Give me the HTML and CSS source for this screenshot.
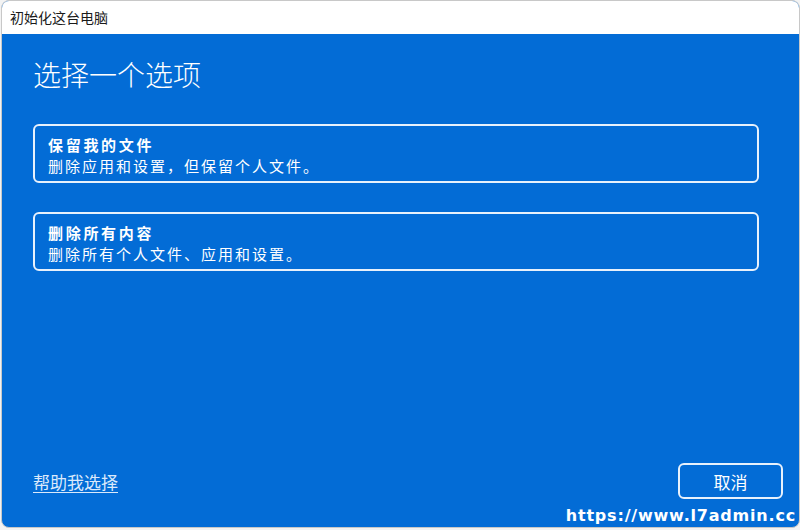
FILE: index.html
```html
<!DOCTYPE html>
<html lang="zh-CN">
<head>
<meta charset="utf-8">
<title>初始化这台电脑</title>
<link rel="stylesheet" href="styles.css">
</head>
<body>
<div class="window">
  <div class="titlebar">初始化这台电脑</div>
  <div class="content">
    <h1 class="heading">选择一个选项</h1>
    <div class="options">
      <div class="option">
        <div class="option-title">保留我的文件</div>
        <div class="option-desc">删除应用和设置，但保留个人文件。</div>
      </div>
      <div class="option">
        <div class="option-title">删除所有内容</div>
        <div class="option-desc">删除所有个人文件、应用和设置。</div>
      </div>
    </div>
    <div class="footer">
      <a class="help-link" href="#">帮助我选择</a>
      <button class="cancel">取消</button>
    </div>
  </div>
  <div class="watermark">https://www.l7admin.cc</div>
</div>
</body>
</html>
```
FILE: styles.css
```css
html, body {
  margin: 0;
  padding: 0;
  background: #f3f3f3;
}
body {
  width: 800px;
  height: 530px;
  overflow: hidden;
  font-family: "Noto Sans CJK SC", "Noto Sans", sans-serif;
}
.window {
  position: relative;
  box-sizing: border-box;
  width: 799px;
  height: 528px;
  margin-left: 1px;
  border: 1px solid #c8c8c8;
  border-radius: 8px;
  overflow: hidden;
  display: flex;
  flex-direction: column;
  background: #036cd6;
}
.titlebar {
  height: 33px;
  background: #ffffff;
  color: #1a1a1a;
  font-size: 14px;
  line-height: 33px;
  padding-left: 8px;
  flex: none;
}
.content {
  flex: 1;
  display: flex;
  flex-direction: column;
  padding: 20px 16px 28px 31px;
  color: #ffffff;
}
.heading {
  margin: 0;
  font-size: 28px;
  font-weight: 300;
  line-height: 40px;
}
.options {
  margin-top: 30px;
  display: flex;
  flex-direction: column;
  gap: 29px;
  width: 726px;
}
.option {
  box-sizing: border-box;
  height: 59px;
  border: 2px solid #e8f1fc;
  border-radius: 6px;
  padding: 8px 13px 0 13px;
}
.option-title {
  font-size: 15px;
  font-weight: 700;
  line-height: 21px;
  letter-spacing: 2.7px;
}
.option-desc {
  font-size: 15px;
  font-weight: 400;
  line-height: 21px;
  letter-spacing: 2px;
}
.footer {
  margin-top: auto;
  display: flex;
  align-items: center;
  justify-content: space-between;
}
.help-link {
  color: #dbe9fb;
  font-size: 17px;
  text-decoration: underline;
  text-underline-offset: 3px;
  text-decoration-thickness: 1px;
}
.cancel {
  box-sizing: border-box;
  width: 105px;
  height: 36px;
  background: transparent;
  border: 2px solid #e8f1fc;
  border-radius: 6px;
  color: #ffffff;
  font-family: "Noto Sans CJK SC", "Noto Sans", sans-serif;
  font-size: 17px;
  padding: 0;
}
.watermark {
  position: absolute;
  right: 3px;
  bottom: 0px;
  font-family: "DejaVu Sans", "Liberation Sans", sans-serif;
  font-weight: 700;
  font-size: 16px;
  letter-spacing: 0.8px;
  color: #ffffff;
  line-height: 22px;
}
```
